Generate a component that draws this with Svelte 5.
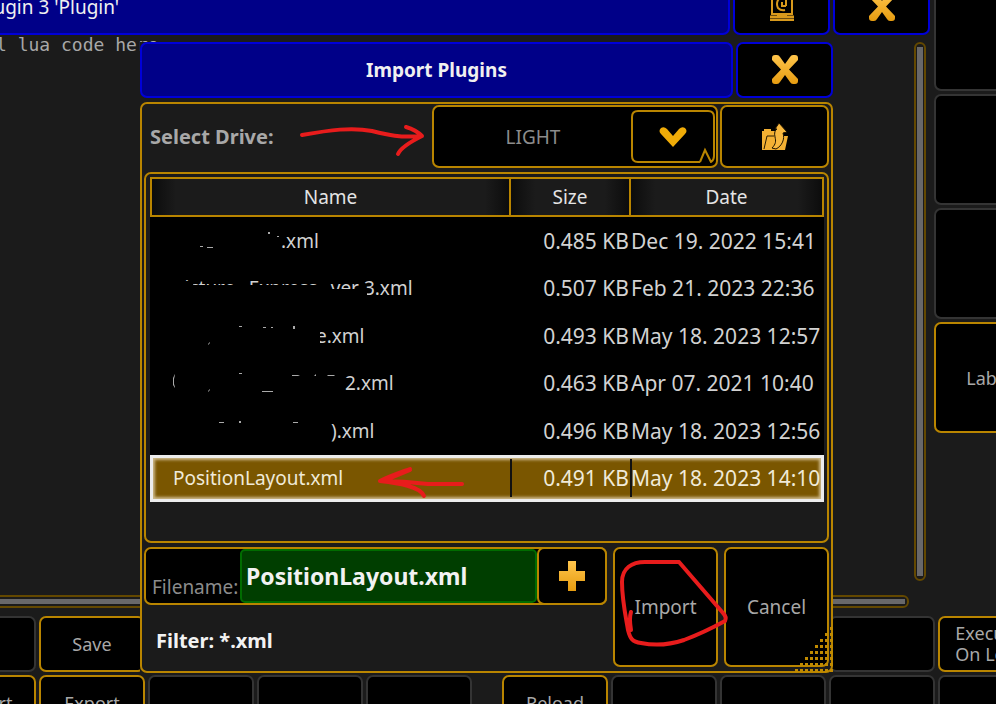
<script>
  const files = [
    { lead: 108, name: '.xml', size: '0.485 KB', date: 'Dec 19. 2022 15:41', marks: 'M95 4h2v2h-2zM104 8h2v1h-2zM27 18h3v1h-3zM34 19h6v1h-6z' },
    { lead: 0, name: 'Picture_ Express_ ver 3.xml', size: '0.507 KB', date: 'Feb 21. 2023 22:36', cover: 'M0 0h2v26H0zM0 6h20v20H0zM16 10h134v16H16zM150 14h36v12h-36zM186 17h8v9h-8z' },
    { lead: 143, name: 'e.xml', size: '0.493 KB', date: 'May 18. 2023 12:57', marks: 'M66 3h3v1h-3zM90 4h3v1h-3zM98 4h2v1h-2zM120 3h2v3h-2zM35 21l2-2v1l-2 2z', cover: 'M143 4h4v16h-4z' },
    { lead: 172, name: '2.xml', size: '0.463 KB', date: 'Apr 07. 2021 10:40', marks: 'M2 4l-2 4v7l2 3v-1l-1-3v-5l1-4zM35 21l2-2v1l-2 2zM66 3h3v1h-3zM89 21h11v1h-11zM119 5h6l2 1h-8zM141 6l2-2v2zM155 5h6l1 1h-8z', cover: 'M171 8h6v5h-6z' },
    { lead: 158, name: ').xml', size: '0.496 KB', date: 'May 18. 2023 12:56', marks: 'M46 4h5v1h-5zM66 3h2v2h-2zM120 4h5v1h-5z' },
    { lead: 0, name: 'PositionLayout.xml', size: '0.491 KB', date: 'May 18. 2023 14:10' }
  ];
  const drives = ['LIGHT'];

  let selected = $state(5);
  let drive = $state('LIGHT');
  let filename = $state('PositionLayout.xml');

  const side = ['', '', '', 'Label'];
  const keys = [
    { left: ['', 'Save', '', '', ''], right: ['', '', '', '', 'Execute\nOn Load'] },
    { left: ['Import', 'Export', '', '', ''], right: ['Reload', '', '', '', ''] }
  ];

  const dots = [];
  for (let r = 0; r < 8; r++) {
    for (let c = 0; c <= r; c++) dots.push([37 - c * 5, 2 + r * 6]);
  }
</script>

{#snippet cross()}
  <svg width="28" height="32" viewBox="0 0 28 32" aria-hidden="true">
    <defs>
      <linearGradient id="amber" x1="0" y1="0" x2="0" y2="1">
        <stop offset="0" stop-color="#ffc54c" />
        <stop offset="1" stop-color="#e69c10" />
      </linearGradient>
    </defs>
    <path fill="url(#amber)" d="M1 4Q1 1 4 1H6Q8 1 9 3L14 10L19 3Q20 1 22 1H24Q27 1 27 4V6L18 15.500L27 25V27Q27 30 24 30H22Q20 30 19 28L14 21L9 28Q8 30 6 30H4Q1 30 1 27V25L10 15.500L1 6Z" />
  </svg>
{/snippet}

<div class="screen">
  <div class="workspace">
    <main class="editor">
      <header class="titlebar back">
        <h1>Plugin 3 'Plugin'</h1>
        <button class="key blue" aria-label="Save plugin">
          <svg width="24" height="36" viewBox="0 4 24 36" fill="none" stroke="#d99a1c" stroke-width="2" aria-hidden="true">
            <path d="M2 4V29H22V4" />
            <path d="M15 25Q11 26 8 23Q6 19 8 15Q11 12 16 14V21M16 21H12V17" />
            <path d="M7 30H17M0 32H24" stroke-width="3" />
            <path d="M0 35H24" />
          </svg>
        </button>
        <button class="key blue" aria-label="Close editor">{@render cross()}</button>
      </header>
      <div class="code-area">
        <pre>l lua code here</pre>
        <div class="scroll vertical"><i></i></div>
      </div>
      <div class="scroll horizontal"><i></i></div>
    </main>
    <aside class="side">
      {#each side as label}
        <button class="key" class:on={label} aria-label={label || 'Empty'}>{label}</button>
      {/each}
    </aside>
  </div>

  <footer class="keys">
    {#each keys as row}
      <div class="keyrow">
        <div class="group left">
          {#each row.left as label}
            <button class="key" class:on={label} aria-label={label || 'Empty'}>{label}</button>
          {/each}
        </div>
        <div class="group">
          {#each row.right as label}
            <button class="key" class:on={label} aria-label={label || 'Empty'}>{label}</button>
          {/each}
        </div>
      </div>
    {/each}
  </footer>

  <div class="dialog" role="dialog" aria-labelledby="dialog-title">
    <header class="titlebar">
      <h2 id="dialog-title">Import Plugins</h2>
      <button class="key blue" aria-label="Close">{@render cross()}</button>
    </header>
    <div class="panel">
      <div class="drive">
        <label for="drive">Select Drive:</label>
        <div class="select">
          <select id="drive" bind:value={drive}>
            {#each drives as d}<option>{d}</option>{/each}
          </select>
          <span class="drop">
            <svg width="84" height="53" viewBox="0 0 84 53" fill="none" aria-hidden="true">
              <path d="M69 52H7Q1 52 1 46V7Q1 1 7 1H77Q83 1 83 7V46Q83 50 80 52L74 40L69 52" stroke="#b98500" stroke-width="2" />
              <path d="M30 18Q27 21 30 24L42 37L54 24Q57 21 54 18Q51 16 48 19L42 26L36 19Q33 16 30 18Z" fill="#f0ac08" />
            </svg>
          </span>
        </div>
        <button class="key on" aria-label="Folder up">
          <svg width="28" height="30" viewBox="0 0 28 30" aria-hidden="true">
            <path d="M1 28V9H3V7H10V9H17V14H27L24 28Z" fill="#f3b033" />
            <path d="M3 27L6 14H13" fill="none" stroke="#2b1c00" stroke-width="1" />
            <path d="M11 26C15 22 15 19 14 15C13 11 14 8 16 7L14 7L18 1L26 10L22 11C24 17 21 24 15 27Z" fill="#f8b83f" stroke="#1c1200" stroke-width="1" />
          </svg>
        </button>
      </div>

      <div class="list">
        <table>
          <colgroup><col class="c-name" /><col class="c-size" /><col /></colgroup>
          <thead>
            <tr><th>Name</th><th>Size</th><th>Date</th></tr>
          </thead>
          <tbody>
            {#each files as f, i}
              <tr class:selected={i === selected} onclick={() => (selected = i)}>
                <td class="name">
                  <span class="file">
                    {#if f.lead}<span style:width="{f.lead}px"></span>{/if}{f.name}
                    {#if f.marks || f.cover}
                      <svg width="260" height="26" viewBox="0 0 260 26" aria-hidden="true">
                        {#if f.marks}<path d={f.marks} fill="#aaa" />{/if}
                        {#if f.cover}<path d={f.cover} fill="#000" />{/if}
                      </svg>
                    {/if}
                  </span>
                </td>
                <td class="size">{f.size}</td>
                <td>{f.date}</td>
              </tr>
            {/each}
          </tbody>
        </table>
      </div>

      <div class="bottom">
        <div class="fields">
          <div class="filename">
            <label for="filename">Filename:</label>
            <input id="filename" type="text" bind:value={filename} />
            <button class="key on" aria-label="Edit filename">
              <svg width="28" height="32" viewBox="0 0 28 32" aria-hidden="true">
                <path d="M10 1H18V11H27V21H18V31H10V21H1V11H10Z" fill="url(#amber)" />
              </svg>
            </button>
          </div>
          <p>Filter: *.xml</p>
        </div>
        <button class="key on action">Import</button>
        <button class="key on action">Cancel</button>
      </div>
    </div>

    <svg class="grip" width="40" height="48" viewBox="0 0 40 48" aria-hidden="true">
      {#each dots as [x, y]}<rect {x} {y} width="3" height="3" fill="#c08a00" />{/each}
    </svg>

    <svg class="notes" width="693" height="631" viewBox="140 42 693 631" fill="none" stroke="#e81c1c" stroke-linecap="round" stroke-linejoin="round" aria-hidden="true">
      <path stroke-width="4" d="M302 135C330 130 352 127 372 131C388 135 400 138 422 136M406 127Q416 130 422 136C412 141 401 147 398 154" />
      <path stroke-width="4" d="M462 484H428C412 482 398 481 380 481C390 476 402 472 410 469M380 481C396 483 420 486 424 496M410 470L386 480" />
      <path stroke-width="4" d="M679 562H645C632 562 622 568 622 582C622 600 626 618 628 630C630 638 632 642 641 643C656 646 672 644 684 640C700 634 714 627 725 621Q727 617 723 613L679 562M631 612Q629 618 631 630" />
    </svg>
  </div>
</div>

<style>
  :global(body) {
    margin: 0;
    background: #1b1b1b;
  }
  .screen {
    --gold: #b98500;
    --blue: #0000d8;
    --face: #1b1b1b;
    position: relative;
    display: flex;
    flex-direction: column;
    height: 100vh;
    overflow: hidden;
    background: var(--face);
    color: #a8a8a8;
    font-family: "Noto Sans", "Open Sans", sans-serif;
    font-size: 19px;
  }
  .screen * {
    box-sizing: border-box;
  }
  button, input, select {
    font: inherit;
    color: inherit;
    padding: 0;
    margin: 0;
  }
  .key {
    display: flex;
    align-items: center;
    justify-content: center;
    flex: none;
    border: 2px solid #343434;
    border-radius: 7px;
    background: #000;
  }
  .key.on {
    border-color: var(--gold);
  }
  .key.blue {
    width: 97px;
    border-color: var(--blue);
  }
  .workspace {
    display: flex;
    flex: 1;
    min-height: 0;
  }
  .editor {
    display: flex;
    flex: 1;
    flex-direction: column;
    min-width: 0;
    padding-bottom: 8px;
  }
  .titlebar {
    display: flex;
    gap: 3px;
    height: 56px;
    flex: none;
  }
  .titlebar.back {
    margin: -21px 1px 0 -8px;
  }
  h1, h2 {
    display: flex;
    align-items: center;
    flex: 1;
    margin: 0;
    border: 2px solid var(--blue);
    border-radius: 7px;
    background: #000088;
    color: #f0f0f0;
    font-size: 19px;
  }
  h1 {
    font-weight: 400;
    text-indent: -17px;
  }
  h2 {
    justify-content: center;
  }
  .code-area {
    display: flex;
    flex: 1;
    justify-content: space-between;
    padding: 0 5px 14px 0;
  }
  pre {
    margin: 0;
    font-family: "DejaVu Sans Mono", monospace;
    font-size: 18px;
    line-height: 20px;
    text-indent: -4px;
  }
  .scroll {
    border: 2px solid #634800;
    border-radius: 6px;
    padding: 2px;
  }
  .scroll i {
    display: block;
    height: 100%;
    background: #68686a;
  }
  .vertical {
    width: 12px;
    margin-top: 7px;
    padding: 3px 1px;
  }
  .horizontal {
    height: 13px;
    margin: 0 22px 0 -8px;
  }
  .side {
    display: flex;
    flex-direction: column;
    gap: 3px;
    width: 62px;
    margin: -20px 0 0 3px;
    font-size: 18px;
  }
  .side .key {
    width: 110px;
    height: 111px;
  }
  .keys {
    display: flex;
    flex-direction: column;
    gap: 3px;
    height: 88px;
    flex: none;
    overflow: hidden;
    font-size: 18px;
    line-height: 21px;
  }
  .keyrow {
    display: grid;
    grid-template-columns: 472px 1fr;
    gap: 30px;
  }
  .group {
    display: flex;
    gap: 3px;
    min-width: 0;
  }
  .group.left {
    justify-content: flex-end;
  }
  .group .key {
    width: 106px;
    height: 56px;
    text-align: left;
    white-space: pre-line;
  }

  .dialog {
    position: absolute;
    top: 42px;
    left: 140px;
    width: 693px;
    display: flex;
    flex-direction: column;
    gap: 4px;
    background: var(--face);
  }
  .panel {
    display: flex;
    flex-direction: column;
    gap: 4px;
    border: 2px solid var(--gold);
    border-radius: 7px;
    padding: 1px 2px 4px;
  }
  .drive {
    display: flex;
    gap: 2px;
    height: 63px;
  }
  .drive label {
    flex: 1;
    align-self: center;
    padding-left: 6px;
    font-size: 20px;
    font-weight: 700;
  }
  .select {
    position: relative;
    width: 286px;
    border: 2px solid var(--gold);
    border-radius: 7px;
    background: #000;
  }
  select {
    width: 100%;
    height: 100%;
    padding-right: 84px;
    border: 0;
    background: transparent;
    appearance: none;
    text-align: center;
    text-align-last: center;
    color: #8c8c8c;
  }
  .drop {
    position: absolute;
    top: 3px;
    right: 1px;
    pointer-events: none;
  }
  .drop svg, .key svg {
    display: block;
  }
  .drive .key {
    width: 109px;
  }
  .list {
    border: 2px solid var(--gold);
    border-radius: 7px;
    padding: 3px 3px 39px 4px;
  }
  table {
    width: 100%;
    height: 325px;
    border-collapse: separate;
    border-spacing: 0;
    table-layout: fixed;
    background: #000;
    color: #d2d2d2;
  }
  .c-name {
    width: 360px;
  }
  .c-size {
    width: 120px;
  }
  th {
    height: 40px;
    padding: 0;
    border: 2px solid var(--gold);
    border-right-width: 1px;
    border-left-width: 1px;
    background: linear-gradient(90deg, #0c0c0c, #1b1b1b 24px, #1b1b1b calc(100% - 24px), #0c0c0c);
    color: #e4e4e4;
    font-weight: 400;
  }
  th:first-child {
    border-left-width: 2px;
  }
  th:last-child {
    border-right-width: 2px;
  }
  td {
    padding: 0 0 0 1px;
    font-size: 21px;
    line-height: 26px;
    white-space: nowrap;
  }
  .name {
    padding-left: 23px;
    font-size: 19px;
  }
  .size {
    padding: 0 1px 0 0;
    text-align: right;
  }
  .file {
    position: relative;
    display: flex;
    white-space: pre;
  }
  .file svg {
    position: absolute;
    top: 0;
    left: 0;
  }
  .selected {
    background: #7a5600;
    box-shadow: inset 0 0 0 3px #ececec, inset 0 0 3px 5px #cdb98a;
    color: #f0ead8;
  }
  .selected td + td {
    background: linear-gradient(#111, #111) 0 50% / 2px 38px no-repeat;
  }
  .bottom {
    display: flex;
    gap: 6px;
  }
  .fields {
    flex: 1;
    min-width: 0;
  }
  .filename {
    display: flex;
    height: 58px;
    border: 2px solid var(--gold);
    border-radius: 7px;
    background: #000;
    color: #8c8c8c;
  }
  .filename label {
    flex: 1;
    align-self: flex-end;
    min-width: 0;
    padding: 0 0 3px 6px;
  }
  .filename input {
    width: 297px;
    padding: 0 4px;
    border: 2px solid #006c00;
    border-radius: 5px;
    background: #003e00;
    color: #f2f2f2;
    font-size: 23px;
    font-weight: 700;
    outline: 0;
  }
  .filename .key {
    width: 70px;
    margin: -2px -2px -2px 0;
  }
  p {
    margin: 0;
    padding: 22px 0 0 12px;
    color: #f2f2f2;
    font-size: 20px;
    font-weight: 700;
  }
  .action {
    width: 105px;
    height: 120px;
  }
  .grip, .notes {
    position: absolute;
    right: 0;
    bottom: 0;
    pointer-events: none;
  }
</style>
